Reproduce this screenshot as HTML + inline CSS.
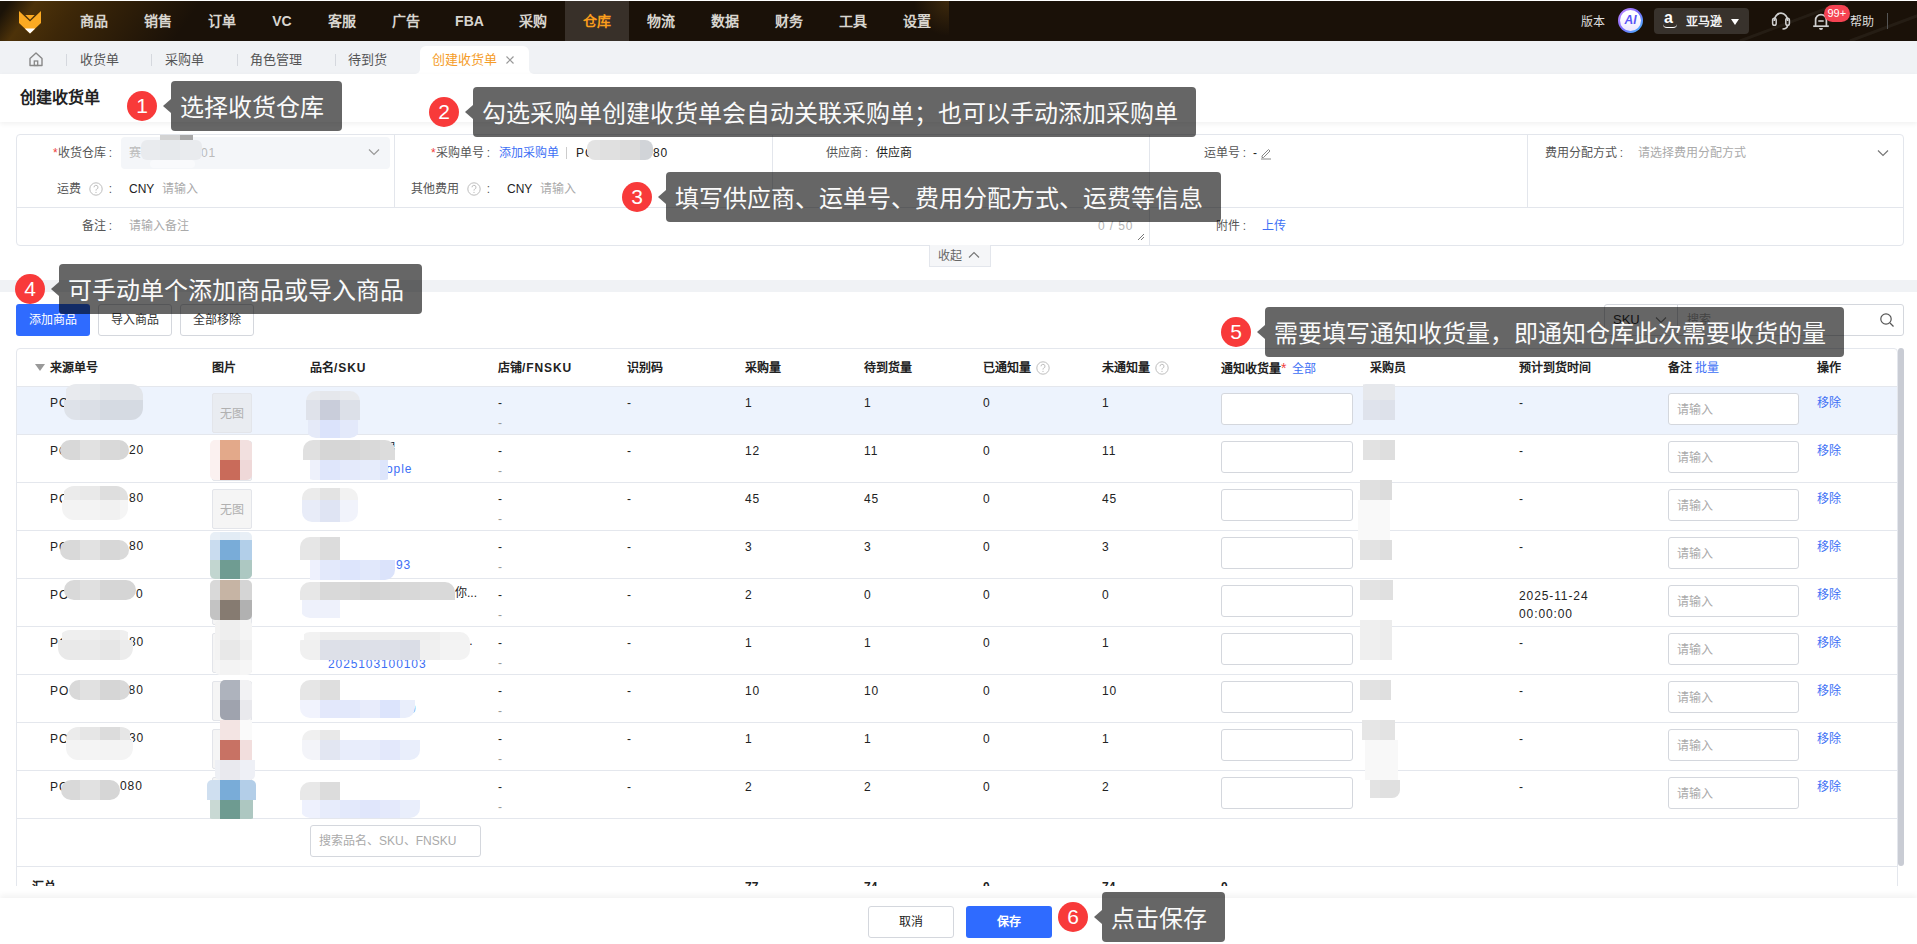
<!DOCTYPE html><html lang="zh-CN"><head><meta charset="utf-8"><style>
*{box-sizing:border-box;margin:0;padding:0}
html,body{width:1917px;height:944px;overflow:hidden;background:#fff}
body{position:relative;font-family:"Liberation Sans",sans-serif;color:#222;font-size:12px}
.a{position:absolute}
.t{position:absolute;white-space:nowrap;line-height:16px}
.hdr{left:0;top:1px;width:1917px;height:40px;background:#1a1108}
.nav{position:absolute;top:1px;height:40px;line-height:41px;color:#d8d5cf;font-size:14px;font-weight:bold;text-align:center}
.nav b{font-weight:bold}
.tabs{left:0;top:41px;width:1917px;height:33px;background:#f0f2f5}
.tab{position:absolute;top:52px;line-height:16px;font-size:13px;color:#555}
.sep{position:absolute;top:54px;width:1px;height:12px;background:#d5d8de}
.lbl{position:absolute;line-height:16px;font-size:12px;color:#555;text-align:right;white-space:nowrap}
.val{position:absolute;line-height:16px;font-size:12px;color:#222;white-space:nowrap}
.ph{color:#aaa}
.blue{color:#3d6ff5 !important}
.red{color:#f0413c !important}
.btn{position:absolute;border-radius:3px;text-align:center;font-size:12px;line-height:30px}
.th{position:absolute;top:360px;line-height:16px;font-weight:bold;font-size:12px;color:#222;white-space:nowrap}
.td{position:absolute;line-height:16px;font-size:12px;color:#222;white-space:nowrap}
.inp{position:absolute;width:132px;height:32px;border:1px solid #d4d7dd;border-radius:3px;background:#fff}
.inp2{position:absolute;width:131px;height:32px;border:1px solid #d4d7dd;border-radius:3px;background:#fff;font-size:12px;color:#aaa;line-height:32px;padding-left:8px}
.hl{position:absolute;left:17px;width:1880px;height:1px;background:#e4e7ed}
.tip{position:absolute;height:50px;background:rgba(0,0,0,0.6);border-radius:4px;color:#fafafa;font-size:24px;line-height:53px;padding-left:9px;white-space:nowrap}
.tip:before{content:"";position:absolute;left:-8px;top:17.5px;border-right:8px solid rgba(0,0,0,0.6);border-top:7.5px solid transparent;border-bottom:7.5px solid transparent}
.dot{position:absolute;width:30px;height:30px;border-radius:50%;background:#f83a3a;color:#fff;font-size:21px;line-height:30px;text-align:center}
.q{display:inline-block;width:14px;height:14px;vertical-align:-3px}
.ls{letter-spacing:0.9px}
.cl{font-style:normal;margin-left:3px}
.blob{position:absolute;filter:blur(1.5px)}
</style></head><body><div class="a hdr"></div>
<div class="a" style="left:0;top:1px;width:260px;height:40px;background:linear-gradient(125deg,#1b1308 0px,#1b1308 8px,#4d3209 30px,#3d2708 65px,rgba(26,17,8,0) 165px)"></div>
<svg class="a" style="left:1700px;top:1px" width="217" height="40" viewBox="0 0 217 40"><line x1="40" y1="40" x2="160" y2="-5" stroke="rgba(255,255,255,0.05)" stroke-width="3"/><line x1="150" y1="40" x2="230" y2="10" stroke="rgba(255,255,255,0.05)" stroke-width="3"/></svg>
<div class="a" style="left:900px;top:1px;width:49px;height:40px;background:radial-gradient(circle at 100% 0%,rgba(90,60,15,0.55) 0px,rgba(26,17,8,0) 35px)"></div>
<svg class="a" style="left:0;top:0" width="60" height="41" viewBox="0 0 60 41"><polygon points="19,11 30,21.5 41,11 41,23 30,33.5 19,23" fill="#fcaa22"/><polygon points="25.3,15 34.7,15 30,19.8" fill="#fcaa22"/><polygon points="24.8,28.5 35.2,28.5 30,33.5" fill="#fff"/></svg>
<div class="nav" style="left:62px;width:64px">商品</div>
<div class="nav" style="left:126px;width:64px">销售</div>
<div class="nav" style="left:190px;width:64px">订单</div>
<div class="nav" style="left:254px;width:56px"><b>VC</b></div>
<div class="nav" style="left:310px;width:64px">客服</div>
<div class="nav" style="left:374px;width:64px">广告</div>
<div class="nav" style="left:438px;width:63px"><b>FBA</b></div>
<div class="nav" style="left:501px;width:64px">采购</div>
<div class="nav" style="left:565px;width:64px;background:#383029;color:#fa9d1c">仓库</div>
<div class="nav" style="left:629px;width:64px">物流</div>
<div class="nav" style="left:693px;width:64px">数据</div>
<div class="nav" style="left:757px;width:64px">财务</div>
<div class="nav" style="left:821px;width:64px">工具</div>
<div class="nav" style="left:885px;width:64px">设置</div>
<div class="t" style="left:1581px;top:13.5px;color:#ddd;font-size:12px">版本</div>
<div class="a" style="left:1618px;top:8px;width:25px;height:25px;border-radius:50%;background:linear-gradient(135deg,#c98bff,#7b6cff 50%,#3ec3ff)"></div>
<div class="a" style="left:1620px;top:10px;width:21px;height:21px;border-radius:50%;background:linear-gradient(180deg,#fff 30%,#ece6ff);color:#5a55f5;font-weight:bold;font-style:italic;font-size:12px;line-height:21px;text-align:center">AI</div>
<div class="a" style="left:1654px;top:8px;width:95px;height:26px;border-radius:4px;background:#38322c"></div>
<div class="t" style="left:1664px;top:10px;color:#fff;font-size:16px;font-weight:bold">a</div>
<div class="a" style="left:1663px;top:23.5px;width:14px;height:4px;border-bottom:1.5px solid #fff;border-radius:0 0 9px 9px"></div>
<div class="t" style="left:1686px;top:13.5px;color:#f0f0f0;font-size:12px;font-weight:bold">亚马逊</div>
<div class="a" style="left:1731px;top:19px;width:0;height:0;border-left:4.5px solid transparent;border-right:4.5px solid transparent;border-top:6px solid #fff"></div>
<svg class="a" style="left:1770px;top:10px" width="22" height="22" viewBox="0 0 22 22"><path d="M4.3 11 A6.7 7.8 0 0 1 17.7 11" fill="none" stroke="#cfcfcf" stroke-width="1.8"/><rect x="2.6" y="8.2" width="3.6" height="7" rx="1.8" fill="none" stroke="#cfcfcf" stroke-width="1.5"/><rect x="15.8" y="8.2" width="3.6" height="7" rx="1.8" fill="none" stroke="#cfcfcf" stroke-width="1.5"/><path d="M17.6 15.2 Q17.4 18.8 12.5 19" fill="none" stroke="#cfcfcf" stroke-width="1.7"/></svg>
<svg class="a" style="left:1811px;top:11px" width="20" height="20" viewBox="0 0 20 20"><path d="M4.6 15 L4.6 9 A5.4 5.4 0 0 1 15.4 9 L15.4 15" fill="none" stroke="#cfcfcf" stroke-width="1.7"/><line x1="2.2" y1="15.2" x2="17.8" y2="15.2" stroke="#cfcfcf" stroke-width="1.7"/><line x1="7.3" y1="10" x2="12.7" y2="10" stroke="#cfcfcf" stroke-width="1.6"/><path d="M8 17 A2 2 0 0 0 12 17 Z" fill="#cfcfcf"/></svg>
<div class="a" style="left:1824px;top:4.5px;width:25.5px;height:17px;border-radius:8.5px;background:#f54352;color:#fff;font-size:11px;line-height:17px;text-align:center">99+</div>
<div class="t" style="left:1850px;top:13.5px;color:#ddd;font-size:12px">帮助</div>
<div class="a" style="left:1887px;top:13px;width:1px;height:16px;background:#555"></div>
<div class="a" style="left:0;top:41px;width:420px;height:33px;background:#f0f2f5;border-bottom-right-radius:5px"></div>
<div class="a" style="left:529px;top:41px;width:1388px;height:33px;background:#f0f2f5;border-bottom-left-radius:5px"></div>
<div class="a" style="left:420px;top:41px;width:109px;height:20px;background:#f0f2f5"></div>
<svg class="a" style="left:28px;top:51px" width="16" height="16" viewBox="0 0 16 16"><path d="M2 7.5 L8 2 L14 7.5 L14 14.5 L2 14.5 Z" fill="none" stroke="#888" stroke-width="1.4" stroke-linejoin="round"/><rect x="6.3" y="10" width="3.4" height="4.5" fill="none" stroke="#888" stroke-width="1.3"/></svg>
<div class="sep" style="left:66px"></div>
<div class="sep" style="left:151px"></div>
<div class="sep" style="left:237px"></div>
<div class="sep" style="left:335px"></div>
<div class="tab" style="left:80px">收货单</div>
<div class="tab" style="left:165px">采购单</div>
<div class="tab" style="left:250px">角色管理</div>
<div class="tab" style="left:348px">待到货</div>
<div class="a" style="left:420px;top:46px;width:109px;height:28px;background:#fff;border-radius:6px 6px 0 0"></div>
<div class="tab" style="left:432px;color:#f59c28">创建收货单</div>
<svg class="a" style="left:505px;top:55px" width="10" height="10" viewBox="0 0 10 10"><path d="M1.5 1.5 L8.5 8.5 M8.5 1.5 L1.5 8.5" stroke="#999" stroke-width="1.2"/></svg>
<div class="a" style="left:0;top:74px;width:1917px;height:48px;background:#fff;box-shadow:0 2px 5px rgba(0,0,0,0.06)"></div>
<div class="t" style="left:20px;top:89px;font-size:16px;line-height:18px;color:#222;font-weight:bold">创建收货单</div>
<div class="a" style="left:16px;top:134px;width:1888px;height:112px;border:1px solid #e3e6ec;border-radius:4px"></div>
<div class="a" style="left:17px;top:207px;width:1886px;height:1px;background:#e3e6ec"></div>
<div class="a" style="left:394px;top:135px;width:1px;height:72px;background:#e3e6ec"></div>
<div class="a" style="left:772px;top:135px;width:1px;height:72px;background:#e3e6ec"></div>
<div class="a" style="left:1149px;top:135px;width:1px;height:72px;background:#e3e6ec"></div>
<div class="a" style="left:1527px;top:135px;width:1px;height:72px;background:#e3e6ec"></div>
<div class="a" style="left:1149px;top:208px;width:1px;height:37px;background:#e3e6ec"></div>
<div class="lbl" style="right:1805px;top:145px"><span class="red">*</span>收货仓库<i class="cl">:</i></div>
<div class="a" style="left:121px;top:137px;width:269px;height:32px;background:#f4f6f9;border-radius:4px"></div>
<div class="val ph" style="left:129px;top:145px;color:#bbb">赛</div>
<div class="val ph ls" style="left:201px;top:145px;color:#bbb">01</div>
<svg class="a" style="left:368px;top:148px" width="12" height="8" viewBox="0 0 12 8"><path d="M1 1.5 L6 6.5 L11 1.5" fill="none" stroke="#999" stroke-width="1.2"/></svg>
<div class="lbl" style="right:1805px;top:181px">运费<svg class="q" style="margin:0 3px 0 8px" viewBox="0 0 14 14"><circle cx="7" cy="7" r="6.2" fill="none" stroke="#bdbdbd" stroke-width="1"/><path d="M5 5.3 A2 2 0 1 1 7.6 7.2 Q7 7.5 7 8.6" fill="none" stroke="#bdbdbd" stroke-width="1"/><circle cx="7" cy="10.4" r="0.6" fill="#bdbdbd"/></svg><i class="cl">:</i></div>
<div class="val" style="left:129px;top:181px">CNY</div><div class="val ph" style="left:162px;top:181px">请输入</div>
<div class="lbl" style="right:1805px;top:218px">备注<i class="cl">:</i></div>
<div class="val ph" style="left:129px;top:218px">请输入备注</div>
<div class="val ph ls" style="left:1098px;top:218px;color:#b5b5b5;font-size:12px">0 / 50</div>
<svg class="a" style="left:1136px;top:232px" width="9" height="9" viewBox="0 0 9 9"><path d="M8 2 L2 8 M8 5 L5 8" stroke="#777" stroke-width="1"/></svg>
<div class="lbl" style="right:1427px;top:145px"><span class="red">*</span>采购单号<i class="cl">:</i></div>
<div class="val blue" style="left:499px;top:145px">添加采购单</div>
<div class="a" style="left:566px;top:147px;width:1px;height:12px;background:#ccc"></div>
<div class="val ls" style="left:576px;top:145px">PC</div><div class="val ls" style="left:653px;top:145px">80</div>
<div class="lbl" style="right:1427px;top:181px">其他费用<svg class="q" style="margin:0 3px 0 8px" viewBox="0 0 14 14"><circle cx="7" cy="7" r="6.2" fill="none" stroke="#bdbdbd" stroke-width="1"/><path d="M5 5.3 A2 2 0 1 1 7.6 7.2 Q7 7.5 7 8.6" fill="none" stroke="#bdbdbd" stroke-width="1"/><circle cx="7" cy="10.4" r="0.6" fill="#bdbdbd"/></svg><i class="cl">:</i></div>
<div class="val" style="left:507px;top:181px">CNY</div><div class="val ph" style="left:540px;top:181px">请输入</div>
<div class="lbl" style="right:1049px;top:145px">供应商<i class="cl">:</i></div>
<div class="val" style="left:876px;top:145px">供应商</div>
<div class="lbl" style="right:671px;top:145px">运单号<i class="cl">:</i></div>
<div class="val" style="left:1253px;top:145px">-</div>
<svg class="a" style="left:1259px;top:146px" width="14" height="14" viewBox="0 0 14 14"><path d="M3 10 L9.5 3.5 L11 5 L4.5 11.5 L3 11.5 Z" fill="none" stroke="#888" stroke-width="1"/><line x1="2" y1="13" x2="12" y2="13" stroke="#888" stroke-width="1"/></svg>
<div class="lbl" style="right:294px;top:145px">费用分配方式<i class="cl">:</i></div>
<div class="val ph" style="left:1638px;top:145px">请选择费用分配方式</div>
<svg class="a" style="left:1877px;top:149px" width="12" height="8" viewBox="0 0 12 8"><path d="M1 1.5 L6 6.5 L11 1.5" fill="none" stroke="#777" stroke-width="1.2"/></svg>
<div class="lbl" style="right:671px;top:218px">附件<i class="cl">:</i></div>
<div class="val blue" style="left:1262px;top:218px">上传</div>
<div class="a" style="left:929px;top:245px;width:62px;height:22px;background:#f5f6f8;border:1px solid #e3e6ec;border-top:none"></div>
<div class="val" style="left:938px;top:248px;color:#666">收起</div>
<svg class="a" style="left:968px;top:251px" width="12" height="8" viewBox="0 0 12 8"><path d="M1 6.5 L6 1.5 L11 6.5" fill="none" stroke="#777" stroke-width="1.2"/></svg>
<div class="a" style="left:0;top:280px;width:1917px;height:12px;background:#f0f2f5"></div>
<div class="btn" style="left:16px;top:304px;width:74px;height:32px;background:#2f6bff;color:#fff;line-height:32px">添加商品</div>
<div class="btn" style="left:98px;top:304px;width:74px;height:32px;border:1px solid #d4d7dd;color:#333">导入商品</div>
<div class="btn" style="left:180px;top:304px;width:74px;height:32px;border:1px solid #d4d7dd;color:#333">全部移除</div>
<div class="a" style="left:1604px;top:304px;width:300px;height:32px;border:1px solid #d4d7dd;border-radius:3px"></div>
<div class="a" style="left:1677px;top:305px;width:1px;height:30px;background:#d4d7dd"></div>
<div class="val" style="left:1613px;top:312px;font-size:13px;color:#333">SKU</div>
<svg class="a" style="left:1655px;top:316px" width="12" height="8" viewBox="0 0 12 8"><path d="M1 1.5 L6 6.5 L11 1.5" fill="none" stroke="#888" stroke-width="1.2"/></svg>
<div class="val ph" style="left:1687px;top:312px;font-size:12px">搜索</div>
<svg class="a" style="left:1879px;top:312px" width="16" height="16" viewBox="0 0 16 16"><circle cx="7" cy="7" r="5.2" fill="none" stroke="#555" stroke-width="1.2"/><line x1="11" y1="11" x2="14.5" y2="14.5" stroke="#555" stroke-width="1.3"/></svg>
<div class="a" style="left:16px;top:348px;width:1882px;height:560px;border:1px solid #e4e7ed;border-radius:4px"></div>
<div class="a" style="left:1898px;top:348px;width:6px;height:518px;background:#c9ccd4;border-radius:3px"></div>
<div class="hl" style="top:386px"></div>
<div class="a" style="left:35px;top:364px;width:0;height:0;border-left:5px solid transparent;border-right:5px solid transparent;border-top:7px solid #999"></div>
<div class="th" style="left:50px">来源单号</div>
<div class="th" style="left:212px">图片</div>
<div class="th" style="left:310px">品名<span class="ls">/SKU</span></div>
<div class="th" style="left:498px">店铺<span class="ls">/FNSKU</span></div>
<div class="th" style="left:627px">识别码</div>
<div class="th" style="left:745px">采购量</div>
<div class="th" style="left:864px">待到货量</div>
<div class="th" style="left:983px">已通知量<svg class="q" style="margin:0 0 0 5px" viewBox="0 0 14 14"><circle cx="7" cy="7" r="6.2" fill="none" stroke="#bdbdbd" stroke-width="1"/><path d="M5 5.3 A2 2 0 1 1 7.6 7.2 Q7 7.5 7 8.6" fill="none" stroke="#bdbdbd" stroke-width="1"/><circle cx="7" cy="10.4" r="0.6" fill="#bdbdbd"/></svg></div>
<div class="th" style="left:1102px">未通知量<svg class="q" style="margin:0 0 0 5px" viewBox="0 0 14 14"><circle cx="7" cy="7" r="6.2" fill="none" stroke="#bdbdbd" stroke-width="1"/><path d="M5 5.3 A2 2 0 1 1 7.6 7.2 Q7 7.5 7 8.6" fill="none" stroke="#bdbdbd" stroke-width="1"/><circle cx="7" cy="10.4" r="0.6" fill="#bdbdbd"/></svg></div>
<div class="th" style="left:1221px">通知收货量<span class="red" style="font-weight:normal;font-size:14px">*</span><span class="blue" style="font-weight:normal;margin-left:6px">全部</span></div>
<div class="th" style="left:1370px">采购员</div>
<div class="th" style="left:1519px">预计到货时间</div>
<div class="th" style="left:1668px">备注 <span class="blue" style="font-weight:normal">批量</span></div>
<div class="th" style="left:1817px">操作</div>
<div class="a" style="left:17px;top:387px;width:1880px;height:47px;background:#edf3fd"></div>
<div class="hl" style="top:434px"></div>
<div class="td ls" style="left:50px;top:394.5px">PO</div>
<div class="td" style="left:498px;top:394.5px">-</div><div class="td" style="left:498px;top:414.5px;color:#999">-</div>
<div class="td" style="left:627px;top:394.5px">-</div>
<div class="td ls" style="left:745px;top:394.5px">1</div>
<div class="td ls" style="left:864px;top:394.5px">1</div>
<div class="td ls" style="left:983px;top:394.5px">0</div>
<div class="td ls" style="left:1102px;top:394.5px">1</div>
<div class="inp" style="left:1221px;top:393px"></div>
<div class="td" style="left:1519px;top:394.5px">-</div>
<div class="inp2" style="left:1668px;top:393px">请输入</div>
<div class="td blue" style="left:1817px;top:394.5px">移除</div>
<div class="hl" style="top:482px"></div>
<div class="td ls" style="left:50px;top:442.5px">PO</div>
<div class="td" style="left:498px;top:442.5px">-</div><div class="td" style="left:498px;top:462.5px;color:#999">-</div>
<div class="td" style="left:627px;top:442.5px">-</div>
<div class="td ls" style="left:745px;top:442.5px">12</div>
<div class="td ls" style="left:864px;top:442.5px">11</div>
<div class="td ls" style="left:983px;top:442.5px">0</div>
<div class="td ls" style="left:1102px;top:442.5px">11</div>
<div class="inp" style="left:1221px;top:441px"></div>
<div class="td" style="left:1519px;top:442.5px">-</div>
<div class="inp2" style="left:1668px;top:441px">请输入</div>
<div class="td blue" style="left:1817px;top:442.5px">移除</div>
<div class="hl" style="top:530px"></div>
<div class="td ls" style="left:50px;top:490.5px">PO</div>
<div class="td" style="left:498px;top:490.5px">-</div><div class="td" style="left:498px;top:510.5px;color:#999">-</div>
<div class="td" style="left:627px;top:490.5px">-</div>
<div class="td ls" style="left:745px;top:490.5px">45</div>
<div class="td ls" style="left:864px;top:490.5px">45</div>
<div class="td ls" style="left:983px;top:490.5px">0</div>
<div class="td ls" style="left:1102px;top:490.5px">45</div>
<div class="inp" style="left:1221px;top:489px"></div>
<div class="td" style="left:1519px;top:490.5px">-</div>
<div class="inp2" style="left:1668px;top:489px">请输入</div>
<div class="td blue" style="left:1817px;top:490.5px">移除</div>
<div class="hl" style="top:578px"></div>
<div class="td ls" style="left:50px;top:538.5px">PO</div>
<div class="td" style="left:498px;top:538.5px">-</div><div class="td" style="left:498px;top:558.5px;color:#999">-</div>
<div class="td" style="left:627px;top:538.5px">-</div>
<div class="td ls" style="left:745px;top:538.5px">3</div>
<div class="td ls" style="left:864px;top:538.5px">3</div>
<div class="td ls" style="left:983px;top:538.5px">0</div>
<div class="td ls" style="left:1102px;top:538.5px">3</div>
<div class="inp" style="left:1221px;top:537px"></div>
<div class="td" style="left:1519px;top:538.5px">-</div>
<div class="inp2" style="left:1668px;top:537px">请输入</div>
<div class="td blue" style="left:1817px;top:538.5px">移除</div>
<div class="hl" style="top:626px"></div>
<div class="td ls" style="left:50px;top:586.5px">PO</div>
<div class="td" style="left:498px;top:586.5px">-</div><div class="td" style="left:498px;top:606.5px;color:#999">-</div>
<div class="td" style="left:627px;top:586.5px">-</div>
<div class="td ls" style="left:745px;top:586.5px">2</div>
<div class="td ls" style="left:864px;top:586.5px">0</div>
<div class="td ls" style="left:983px;top:586.5px">0</div>
<div class="td ls" style="left:1102px;top:586.5px">0</div>
<div class="inp" style="left:1221px;top:585px"></div>
<div class="td ls" style="left:1519px;top:586.5px;line-height:18px">2025-11-24<br>00:00:00</div>
<div class="inp2" style="left:1668px;top:585px">请输入</div>
<div class="td blue" style="left:1817px;top:586.5px">移除</div>
<div class="hl" style="top:674px"></div>
<div class="td ls" style="left:50px;top:634.5px">PO</div>
<div class="td" style="left:498px;top:634.5px">-</div><div class="td" style="left:498px;top:654.5px;color:#999">-</div>
<div class="td" style="left:627px;top:634.5px">-</div>
<div class="td ls" style="left:745px;top:634.5px">1</div>
<div class="td ls" style="left:864px;top:634.5px">1</div>
<div class="td ls" style="left:983px;top:634.5px">0</div>
<div class="td ls" style="left:1102px;top:634.5px">1</div>
<div class="inp" style="left:1221px;top:633px"></div>
<div class="td" style="left:1519px;top:634.5px">-</div>
<div class="inp2" style="left:1668px;top:633px">请输入</div>
<div class="td blue" style="left:1817px;top:634.5px">移除</div>
<div class="hl" style="top:722px"></div>
<div class="td ls" style="left:50px;top:682.5px">PO</div>
<div class="td" style="left:498px;top:682.5px">-</div><div class="td" style="left:498px;top:702.5px;color:#999">-</div>
<div class="td" style="left:627px;top:682.5px">-</div>
<div class="td ls" style="left:745px;top:682.5px">10</div>
<div class="td ls" style="left:864px;top:682.5px">10</div>
<div class="td ls" style="left:983px;top:682.5px">0</div>
<div class="td ls" style="left:1102px;top:682.5px">10</div>
<div class="inp" style="left:1221px;top:681px"></div>
<div class="td" style="left:1519px;top:682.5px">-</div>
<div class="inp2" style="left:1668px;top:681px">请输入</div>
<div class="td blue" style="left:1817px;top:682.5px">移除</div>
<div class="hl" style="top:770px"></div>
<div class="td ls" style="left:50px;top:730.5px">PO</div>
<div class="td" style="left:498px;top:730.5px">-</div><div class="td" style="left:498px;top:750.5px;color:#999">-</div>
<div class="td" style="left:627px;top:730.5px">-</div>
<div class="td ls" style="left:745px;top:730.5px">1</div>
<div class="td ls" style="left:864px;top:730.5px">1</div>
<div class="td ls" style="left:983px;top:730.5px">0</div>
<div class="td ls" style="left:1102px;top:730.5px">1</div>
<div class="inp" style="left:1221px;top:729px"></div>
<div class="td" style="left:1519px;top:730.5px">-</div>
<div class="inp2" style="left:1668px;top:729px">请输入</div>
<div class="td blue" style="left:1817px;top:730.5px">移除</div>
<div class="hl" style="top:818px"></div>
<div class="td ls" style="left:50px;top:778.5px">PO</div>
<div class="td" style="left:498px;top:778.5px">-</div><div class="td" style="left:498px;top:798.5px;color:#999">-</div>
<div class="td" style="left:627px;top:778.5px">-</div>
<div class="td ls" style="left:745px;top:778.5px">2</div>
<div class="td ls" style="left:864px;top:778.5px">2</div>
<div class="td ls" style="left:983px;top:778.5px">0</div>
<div class="td ls" style="left:1102px;top:778.5px">2</div>
<div class="inp" style="left:1221px;top:777px"></div>
<div class="td" style="left:1519px;top:778.5px">-</div>
<div class="inp2" style="left:1668px;top:777px">请输入</div>
<div class="td blue" style="left:1817px;top:778.5px">移除</div>
<div class="a" style="left:212px;top:393px;width:40px;height:40px;border:1px solid #e3e5ea;border-radius:2px;background:#e9ecf1"></div>
<div class="td" style="left:220px;top:406px;color:#b0b0b0">无图</div>
<div class="a" style="left:212px;top:441px;width:40px;height:40px;border:1px solid #e3e5ea;border-radius:2px;background:#f5f5f5"></div>
<div class="a" style="left:212px;top:489px;width:40px;height:40px;border:1px solid #e3e5ea;border-radius:2px;background:#f5f5f5"></div>
<div class="td" style="left:220px;top:502px;color:#b0b0b0">无图</div>
<div class="a" style="left:212px;top:537px;width:40px;height:40px;border:1px solid #e3e5ea;border-radius:2px;background:#f5f5f5"></div>
<div class="a" style="left:212px;top:585px;width:40px;height:40px;border:1px solid #e3e5ea;border-radius:2px;background:#f5f5f5"></div>
<div class="a" style="left:212px;top:633px;width:40px;height:40px;border:1px solid #e3e5ea;border-radius:2px;background:#f5f5f5"></div>
<div class="a" style="left:212px;top:681px;width:40px;height:40px;border:1px solid #e3e5ea;border-radius:2px;background:#f5f5f5"></div>
<div class="a" style="left:212px;top:729px;width:40px;height:40px;border:1px solid #e3e5ea;border-radius:2px;background:#f5f5f5"></div>
<div class="a" style="left:212px;top:777px;width:40px;height:40px;border:1px solid #e3e5ea;border-radius:2px;background:#f5f5f5"></div>
<div class="td ls" style="left:129px;top:442px">20</div>
<div class="td ls" style="left:129px;top:490px">80</div>
<div class="td ls" style="left:129px;top:538px">80</div>
<div class="td ls" style="left:136px;top:586px">0</div>
<div class="td ls" style="left:129px;top:634px">80</div>
<div class="td ls" style="left:121px;top:682px">080</div>
<div class="td ls" style="left:129px;top:730px">30</div>
<div class="td ls" style="left:120px;top:778px">080</div>
<div class="td" style="left:384px;top:440px">男</div>
<div class="td blue ls" style="left:386px;top:461px">ople</div>
<div class="td blue ls" style="left:396px;top:557px">93</div>
<div class="td" style="left:455px;top:585px">你...</div>
<div class="td" style="left:466px;top:633px">..</div>
<div class="td blue ls" style="left:328px;top:656px">2025103100103</div>
<div class="td blue ls" style="left:409px;top:701px">9</div>
<div class="a" style="left:141px;top:140px;width:61px;height:20px;overflow:hidden;border-radius:6px"><div class="a" style="left:0px;top:0px;width:19px;height:20px;background:#e9ebee"></div><div class="a" style="left:19px;top:0px;width:20px;height:20px;background:#e6e9ec"></div><div class="a" style="left:39px;top:0px;width:22px;height:20px;background:#e9ebee"></div></div>
<div class="a" style="left:160px;top:135px;width:33px;height:5px;overflow:hidden;border-radius:0px"><div class="a" style="left:0px;top:0px;width:20px;height:5px;background:#d3d3d3"></div><div class="a" style="left:20px;top:0px;width:13px;height:5px;background:#a8a8a8"></div></div>
<div class="a" style="left:150px;top:160px;width:45px;height:8px;overflow:hidden;border-radius:4px"><div class="a" style="left:0px;top:0px;width:45px;height:8px;background:#f9fafc"></div></div>
<div class="a" style="left:587px;top:140px;width:66px;height:20px;overflow:hidden;border-radius:8px"><div class="a" style="left:0px;top:0px;width:13px;height:20px;background:#e3e3e3"></div><div class="a" style="left:13px;top:0px;width:20px;height:20px;background:#e0e0e0"></div><div class="a" style="left:33px;top:0px;width:20px;height:20px;background:#dcdcdc"></div><div class="a" style="left:53px;top:0px;width:13px;height:20px;background:#d1d4d8"></div></div>
<div class="a" style="left:64px;top:384px;width:79px;height:36px;overflow:hidden;border-radius:12px"><div class="a" style="left:2px;top:0px;width:14px;height:16px;background:#e8eaee"></div><div class="a" style="left:16px;top:0px;width:20px;height:16px;background:#e6e9ed"></div><div class="a" style="left:36px;top:0px;width:20px;height:16px;background:#e2e5ea"></div><div class="a" style="left:56px;top:0px;width:23px;height:16px;background:#e2e5ea"></div><div class="a" style="left:0px;top:16px;width:16px;height:20px;background:#dee2e9"></div><div class="a" style="left:16px;top:16px;width:20px;height:20px;background:#dbdfe6"></div><div class="a" style="left:36px;top:16px;width:20px;height:20px;background:#d5dae2"></div><div class="a" style="left:56px;top:16px;width:23px;height:20px;background:#d5dae2"></div></div>
<div class="a" style="left:60px;top:440px;width:69px;height:20px;overflow:hidden;border-radius:12px"><div class="a" style="left:0px;top:0px;width:20px;height:20px;background:#d8d8d8"></div><div class="a" style="left:20px;top:0px;width:20px;height:20px;background:#e1e1e1"></div><div class="a" style="left:40px;top:0px;width:20px;height:20px;background:#d9d9d9"></div><div class="a" style="left:60px;top:0px;width:9px;height:20px;background:#d6d6d6"></div></div>
<div class="a" style="left:62px;top:486px;width:66px;height:34px;overflow:hidden;border-radius:12px"><div class="a" style="left:2px;top:0px;width:16px;height:14px;background:#ebebeb"></div><div class="a" style="left:18px;top:0px;width:20px;height:14px;background:#e9e9e9"></div><div class="a" style="left:38px;top:0px;width:20px;height:14px;background:#dedede"></div><div class="a" style="left:58px;top:0px;width:8px;height:14px;background:#e0e0e0"></div><div class="a" style="left:0px;top:14px;width:18px;height:20px;background:#f3f3f3"></div><div class="a" style="left:18px;top:14px;width:20px;height:20px;background:#f3f3f3"></div><div class="a" style="left:38px;top:14px;width:20px;height:20px;background:#f1f1f1"></div><div class="a" style="left:58px;top:14px;width:8px;height:20px;background:#f5f5f5"></div></div>
<div class="a" style="left:60px;top:540px;width:69px;height:20px;overflow:hidden;border-radius:12px"><div class="a" style="left:0px;top:0px;width:20px;height:20px;background:#d9d9d9"></div><div class="a" style="left:20px;top:0px;width:20px;height:20px;background:#e2e2e2"></div><div class="a" style="left:40px;top:0px;width:20px;height:20px;background:#d7d7d7"></div><div class="a" style="left:60px;top:0px;width:9px;height:20px;background:#dadada"></div></div>
<div class="a" style="left:64px;top:580px;width:72px;height:20px;overflow:hidden;border-radius:12px"><div class="a" style="left:0px;top:0px;width:16px;height:20px;background:#d9d9d9"></div><div class="a" style="left:16px;top:0px;width:20px;height:20px;background:#e0e0e0"></div><div class="a" style="left:36px;top:0px;width:20px;height:20px;background:#d6d6d6"></div><div class="a" style="left:56px;top:0px;width:16px;height:20px;background:#d5d5d5"></div></div>
<div class="a" style="left:58px;top:630px;width:75px;height:30px;overflow:hidden;border-radius:12px"><div class="a" style="left:4px;top:0px;width:18px;height:10px;background:#efefef"></div><div class="a" style="left:22px;top:0px;width:20px;height:10px;background:#eeeeee"></div><div class="a" style="left:42px;top:0px;width:20px;height:10px;background:#ebebeb"></div><div class="a" style="left:62px;top:0px;width:8px;height:10px;background:#efefef"></div><div class="a" style="left:0px;top:10px;width:22px;height:20px;background:#e9e9e9"></div><div class="a" style="left:22px;top:10px;width:20px;height:20px;background:#eaeaea"></div><div class="a" style="left:42px;top:10px;width:20px;height:20px;background:#e6e6e6"></div><div class="a" style="left:62px;top:10px;width:13px;height:20px;background:#ececec"></div></div>
<div class="a" style="left:69px;top:680px;width:61px;height:20px;overflow:hidden;border-radius:12px"><div class="a" style="left:0px;top:0px;width:11px;height:20px;background:#d9d9d9"></div><div class="a" style="left:11px;top:0px;width:20px;height:20px;background:#e1e1e1"></div><div class="a" style="left:31px;top:0px;width:20px;height:20px;background:#d6d6d6"></div><div class="a" style="left:51px;top:0px;width:10px;height:20px;background:#d9d9d9"></div></div>
<div class="a" style="left:66px;top:727px;width:67px;height:33px;overflow:hidden;border-radius:12px"><div class="a" style="left:0px;top:0px;width:14px;height:13px;background:#ebebeb"></div><div class="a" style="left:14px;top:0px;width:20px;height:13px;background:#e6e6e6"></div><div class="a" style="left:34px;top:0px;width:20px;height:13px;background:#dcdcdc"></div><div class="a" style="left:54px;top:0px;width:10px;height:13px;background:#e6e6e6"></div><div class="a" style="left:0px;top:13px;width:14px;height:20px;background:#f3f3f3"></div><div class="a" style="left:14px;top:13px;width:20px;height:20px;background:#f4f4f4"></div><div class="a" style="left:34px;top:13px;width:20px;height:20px;background:#f3f3f3"></div><div class="a" style="left:54px;top:13px;width:13px;height:20px;background:#f4f4f4"></div></div>
<div class="a" style="left:61px;top:780px;width:59px;height:20px;overflow:hidden;border-radius:12px"><div class="a" style="left:0px;top:0px;width:19px;height:20px;background:#d9d9d9"></div><div class="a" style="left:19px;top:0px;width:20px;height:20px;background:#e1e1e1"></div><div class="a" style="left:39px;top:0px;width:20px;height:20px;background:#d6d6d6"></div></div>
<div class="a" style="left:210px;top:440px;width:42px;height:40px;overflow:hidden;border-radius:5px"><div class="a" style="left:0px;top:0px;width:10px;height:20px;background:#fbf1f0"></div><div class="a" style="left:10px;top:0px;width:20px;height:20px;background:#e3a98a"></div><div class="a" style="left:30px;top:0px;width:12px;height:20px;background:#f2e0df"></div><div class="a" style="left:0px;top:20px;width:10px;height:20px;background:#fbf1f0"></div><div class="a" style="left:10px;top:20px;width:20px;height:20px;background:#c96b5a"></div><div class="a" style="left:30px;top:20px;width:12px;height:20px;background:#efd8d8"></div></div>
<div class="a" style="left:210px;top:532px;width:42px;height:47px;overflow:hidden;border-radius:5px"><div class="a" style="left:0px;top:0px;width:10px;height:8px;background:#e8eff6"></div><div class="a" style="left:10px;top:0px;width:20px;height:8px;background:#e2ecf5"></div><div class="a" style="left:30px;top:0px;width:12px;height:8px;background:#e8eff6"></div><div class="a" style="left:0px;top:8px;width:10px;height:20px;background:#c9dcef"></div><div class="a" style="left:10px;top:8px;width:20px;height:20px;background:#79acd8"></div><div class="a" style="left:30px;top:8px;width:12px;height:20px;background:#b2cfe9"></div><div class="a" style="left:0px;top:28px;width:10px;height:19px;background:#c2d6d0"></div><div class="a" style="left:10px;top:28px;width:20px;height:19px;background:#6f9c92"></div><div class="a" style="left:30px;top:28px;width:12px;height:19px;background:#adc8c2"></div></div>
<div class="a" style="left:210px;top:580px;width:42px;height:40px;overflow:hidden;border-radius:5px"><div class="a" style="left:0px;top:0px;width:10px;height:20px;background:#d9d9d9"></div><div class="a" style="left:10px;top:0px;width:20px;height:20px;background:#c6b4a4"></div><div class="a" style="left:30px;top:0px;width:12px;height:20px;background:#d5d5d5"></div><div class="a" style="left:0px;top:20px;width:10px;height:20px;background:#c3c3c3"></div><div class="a" style="left:10px;top:20px;width:20px;height:20px;background:#867b71"></div><div class="a" style="left:30px;top:20px;width:12px;height:20px;background:#b1b1b1"></div></div>
<div class="a" style="left:215px;top:620px;width:37px;height:55px;overflow:hidden;border-radius:5px"><div class="a" style="left:0px;top:0px;width:5px;height:20px;background:#f2f2f2"></div><div class="a" style="left:5px;top:0px;width:20px;height:20px;background:#eeeeee"></div><div class="a" style="left:25px;top:0px;width:12px;height:20px;background:#f4f4f4"></div><div class="a" style="left:0px;top:20px;width:5px;height:20px;background:#f3f3f3"></div><div class="a" style="left:5px;top:20px;width:20px;height:20px;background:#e8e8e8"></div><div class="a" style="left:25px;top:20px;width:12px;height:20px;background:#f0f0f0"></div><div class="a" style="left:0px;top:40px;width:5px;height:15px;background:#f6f6f6"></div><div class="a" style="left:5px;top:40px;width:20px;height:15px;background:#f3f3f3"></div><div class="a" style="left:25px;top:40px;width:12px;height:15px;background:#f6f6f6"></div></div>
<div class="a" style="left:220px;top:680px;width:32px;height:40px;overflow:hidden;border-radius:5px"><div class="a" style="left:0px;top:0px;width:20px;height:20px;background:#aeb3bd"></div><div class="a" style="left:20px;top:0px;width:12px;height:20px;background:#f2f2f4"></div><div class="a" style="left:0px;top:20px;width:20px;height:20px;background:#9fa3ae"></div><div class="a" style="left:20px;top:20px;width:12px;height:20px;background:#e9e9ed"></div></div>
<div class="a" style="left:215px;top:720px;width:40px;height:60px;overflow:hidden;border-radius:5px"><div class="a" style="left:5px;top:0px;width:20px;height:20px;background:#f3e4e3"></div><div class="a" style="left:25px;top:0px;width:12px;height:20px;background:#fafafa"></div><div class="a" style="left:5px;top:20px;width:20px;height:20px;background:#c87264"></div><div class="a" style="left:25px;top:20px;width:12px;height:20px;background:#f2dedd"></div><div class="a" style="left:0px;top:40px;width:5px;height:20px;background:#eef0f5"></div><div class="a" style="left:5px;top:40px;width:20px;height:20px;background:#e9e9ee"></div><div class="a" style="left:25px;top:40px;width:15px;height:20px;background:#eef0f6"></div></div>
<div class="a" style="left:207px;top:780px;width:49px;height:39px;overflow:hidden;border-radius:5px"><div class="a" style="left:0px;top:0px;width:13px;height:20px;background:#cfdff0"></div><div class="a" style="left:13px;top:0px;width:20px;height:20px;background:#79acd8"></div><div class="a" style="left:33px;top:0px;width:16px;height:20px;background:#b3cee8"></div><div class="a" style="left:3px;top:20px;width:10px;height:19px;background:#c9d9d4"></div><div class="a" style="left:13px;top:20px;width:20px;height:19px;background:#6e9b91"></div><div class="a" style="left:33px;top:20px;width:13px;height:19px;background:#adc7c1"></div></div>
<div class="a" style="left:306px;top:391px;width:54px;height:47px;overflow:hidden;border-radius:10px"><div class="a" style="left:0px;top:0px;width:14px;height:9px;background:#e8eaee"></div><div class="a" style="left:14px;top:0px;width:20px;height:9px;background:#e5e7ec"></div><div class="a" style="left:34px;top:0px;width:20px;height:9px;background:#e8eaee"></div><div class="a" style="left:0px;top:9px;width:14px;height:20px;background:#dfe2ea"></div><div class="a" style="left:14px;top:9px;width:20px;height:20px;background:#c9cdda"></div><div class="a" style="left:34px;top:9px;width:20px;height:20px;background:#dce0e8"></div><div class="a" style="left:2px;top:29px;width:12px;height:18px;background:#e5eaf8"></div><div class="a" style="left:14px;top:29px;width:20px;height:18px;background:#dbe3fb"></div><div class="a" style="left:34px;top:29px;width:18px;height:18px;background:#e3e9fa"></div></div>
<div class="a" style="left:303px;top:440px;width:92px;height:40px;overflow:hidden;border-radius:10px"><div class="a" style="left:0px;top:0px;width:17px;height:20px;background:#e0e0e0"></div><div class="a" style="left:17px;top:0px;width:20px;height:20px;background:#d6d6d6"></div><div class="a" style="left:37px;top:0px;width:20px;height:20px;background:#d6d6d6"></div><div class="a" style="left:57px;top:0px;width:20px;height:20px;background:#d9d9d9"></div><div class="a" style="left:77px;top:0px;width:15px;height:20px;background:#dcdcdc"></div><div class="a" style="left:7px;top:20px;width:10px;height:20px;background:#eef1fb"></div><div class="a" style="left:17px;top:20px;width:20px;height:20px;background:#dfe6fb"></div><div class="a" style="left:37px;top:20px;width:20px;height:20px;background:#e4eafb"></div><div class="a" style="left:57px;top:20px;width:20px;height:20px;background:#e6ecfb"></div><div class="a" style="left:77px;top:20px;width:8px;height:20px;background:#dde5fb"></div></div>
<div class="a" style="left:302px;top:488px;width:56px;height:34px;overflow:hidden;border-radius:10px"><div class="a" style="left:0px;top:0px;width:18px;height:12px;background:#ebebeb"></div><div class="a" style="left:18px;top:0px;width:20px;height:12px;background:#e3e3e3"></div><div class="a" style="left:38px;top:0px;width:18px;height:12px;background:#f2f2f2"></div><div class="a" style="left:0px;top:12px;width:18px;height:22px;background:#e8ecf8"></div><div class="a" style="left:18px;top:12px;width:20px;height:22px;background:#dfe4f3"></div><div class="a" style="left:38px;top:12px;width:18px;height:22px;background:#f1f3fb"></div></div>
<div class="a" style="left:300px;top:537px;width:95px;height:43px;overflow:hidden;border-radius:10px"><div class="a" style="left:0px;top:0px;width:20px;height:23px;background:#e6e6e6"></div><div class="a" style="left:20px;top:0px;width:20px;height:23px;background:#dcdcdc"></div><div class="a" style="left:10px;top:23px;width:10px;height:20px;background:#eef1fd"></div><div class="a" style="left:20px;top:23px;width:20px;height:20px;background:#e3e9fb"></div><div class="a" style="left:40px;top:23px;width:20px;height:20px;background:#dde5fc"></div><div class="a" style="left:60px;top:23px;width:20px;height:20px;background:#e1e8fb"></div><div class="a" style="left:80px;top:23px;width:15px;height:20px;background:#dbe3fb"></div></div>
<div class="a" style="left:300px;top:582px;width:155px;height:36px;overflow:hidden;border-radius:10px"><div class="a" style="left:0px;top:0px;width:20px;height:18px;background:#e7e7e7"></div><div class="a" style="left:20px;top:0px;width:20px;height:18px;background:#d9d9d9"></div><div class="a" style="left:40px;top:0px;width:20px;height:18px;background:#d8d8d8"></div><div class="a" style="left:60px;top:0px;width:20px;height:18px;background:#d4d4d4"></div><div class="a" style="left:80px;top:0px;width:20px;height:18px;background:#d6d6d6"></div><div class="a" style="left:100px;top:0px;width:20px;height:18px;background:#d8d8d8"></div><div class="a" style="left:120px;top:0px;width:20px;height:18px;background:#dadada"></div><div class="a" style="left:140px;top:0px;width:15px;height:18px;background:#d9d9d9"></div><div class="a" style="left:2px;top:18px;width:18px;height:18px;background:#eef1fb"></div><div class="a" style="left:20px;top:18px;width:20px;height:18px;background:#eef1fb"></div></div>
<div class="a" style="left:300px;top:632px;width:170px;height:28px;overflow:hidden;border-radius:10px"><div class="a" style="left:4px;top:0px;width:16px;height:8px;background:#f2f2f2"></div><div class="a" style="left:20px;top:0px;width:120px;height:8px;background:#eeeeee"></div><div class="a" style="left:140px;top:0px;width:30px;height:8px;background:#f2f2f2"></div><div class="a" style="left:0px;top:8px;width:20px;height:20px;background:#f0f0f0"></div><div class="a" style="left:20px;top:8px;width:20px;height:20px;background:#dde0e8"></div><div class="a" style="left:40px;top:8px;width:20px;height:20px;background:#dcdfe7"></div><div class="a" style="left:60px;top:8px;width:20px;height:20px;background:#dde0e8"></div><div class="a" style="left:80px;top:8px;width:20px;height:20px;background:#dde0e8"></div><div class="a" style="left:100px;top:8px;width:20px;height:20px;background:#dadde6"></div><div class="a" style="left:120px;top:8px;width:20px;height:20px;background:#f0f0f0"></div><div class="a" style="left:140px;top:8px;width:30px;height:20px;background:#f3f3f3"></div></div>
<div class="a" style="left:300px;top:680px;width:115px;height:38px;overflow:hidden;border-radius:10px"><div class="a" style="left:0px;top:0px;width:20px;height:20px;background:#e6e6e6"></div><div class="a" style="left:20px;top:0px;width:20px;height:20px;background:#dedede"></div><div class="a" style="left:0px;top:20px;width:20px;height:18px;background:#f1f3fd"></div><div class="a" style="left:20px;top:20px;width:20px;height:18px;background:#e3e8fb"></div><div class="a" style="left:40px;top:20px;width:20px;height:18px;background:#e2e8fb"></div><div class="a" style="left:60px;top:20px;width:20px;height:18px;background:#e8ecfb"></div><div class="a" style="left:80px;top:20px;width:20px;height:18px;background:#dce4fc"></div><div class="a" style="left:100px;top:20px;width:15px;height:18px;background:#e9eefb"></div></div>
<div class="a" style="left:302px;top:730px;width:118px;height:30px;overflow:hidden;border-radius:10px"><div class="a" style="left:0px;top:0px;width:18px;height:10px;background:#f0f0f0"></div><div class="a" style="left:18px;top:0px;width:20px;height:10px;background:#e8e8e8"></div><div class="a" style="left:0px;top:10px;width:18px;height:20px;background:#f3f4f9"></div><div class="a" style="left:18px;top:10px;width:20px;height:20px;background:#e2e6f2"></div><div class="a" style="left:38px;top:10px;width:20px;height:20px;background:#e8edfb"></div><div class="a" style="left:58px;top:10px;width:20px;height:20px;background:#e8edfb"></div><div class="a" style="left:78px;top:10px;width:20px;height:20px;background:#e3e8fb"></div><div class="a" style="left:98px;top:10px;width:20px;height:20px;background:#e9eefb"></div></div>
<div class="a" style="left:300px;top:782px;width:120px;height:36px;overflow:hidden;border-radius:10px"><div class="a" style="left:0px;top:0px;width:20px;height:18px;background:#e8e8e8"></div><div class="a" style="left:20px;top:0px;width:20px;height:18px;background:#dcdcdc"></div><div class="a" style="left:2px;top:18px;width:18px;height:18px;background:#eef1fd"></div><div class="a" style="left:20px;top:18px;width:20px;height:18px;background:#e7ecfb"></div><div class="a" style="left:40px;top:18px;width:20px;height:18px;background:#e3e9fb"></div><div class="a" style="left:60px;top:18px;width:20px;height:18px;background:#e0e6fb"></div><div class="a" style="left:80px;top:18px;width:20px;height:18px;background:#e4e9fb"></div><div class="a" style="left:100px;top:18px;width:20px;height:18px;background:#e9eefb"></div></div>
<div class="a" style="left:1358px;top:384px;width:42px;height:414px;overflow:hidden;border-radius:8px"><div class="a" style="left:5px;top:0px;width:17px;height:16px;background:#e6e8ec"></div><div class="a" style="left:22px;top:0px;width:15px;height:16px;background:#e6e8ec"></div><div class="a" style="left:5px;top:16px;width:17px;height:20px;background:#dfe3ec"></div><div class="a" style="left:22px;top:16px;width:15px;height:20px;background:#dde1ea"></div><div class="a" style="left:5px;top:56px;width:17px;height:20px;background:#e2e2e2"></div><div class="a" style="left:22px;top:56px;width:15px;height:20px;background:#dedede"></div><div class="a" style="left:2px;top:96px;width:20px;height:20px;background:#e0e0e0"></div><div class="a" style="left:22px;top:96px;width:12px;height:20px;background:#dcdcdc"></div><div class="a" style="left:0px;top:116px;width:22px;height:40px;background:#f9f9f9"></div><div class="a" style="left:22px;top:116px;width:10px;height:40px;background:#f9f9f9"></div><div class="a" style="left:2px;top:156px;width:20px;height:20px;background:#e3e3e3"></div><div class="a" style="left:22px;top:156px;width:12px;height:20px;background:#dedede"></div><div class="a" style="left:2px;top:196px;width:20px;height:20px;background:#e3e3e3"></div><div class="a" style="left:22px;top:196px;width:13px;height:20px;background:#e0e0e0"></div><div class="a" style="left:2px;top:236px;width:20px;height:40px;background:#efefef"></div><div class="a" style="left:22px;top:236px;width:12px;height:40px;background:#ececec"></div><div class="a" style="left:2px;top:296px;width:20px;height:20px;background:#e2e2e2"></div><div class="a" style="left:22px;top:296px;width:11px;height:20px;background:#dfdfdf"></div><div class="a" style="left:4px;top:336px;width:18px;height:20px;background:#e6e6e6"></div><div class="a" style="left:22px;top:336px;width:15px;height:20px;background:#e3e3e3"></div><div class="a" style="left:7px;top:356px;width:15px;height:40px;background:#f8f8f8"></div><div class="a" style="left:22px;top:356px;width:18px;height:40px;background:#f8f8f8"></div><div class="a" style="left:12px;top:396px;width:10px;height:18px;background:#e3e3e3"></div><div class="a" style="left:22px;top:396px;width:20px;height:18px;background:#e0e0e0"></div></div>
<div class="a" style="left:310px;top:825px;width:171px;height:32px;border:1px solid #d4d7dd;border-radius:3px;font-size:12px;color:#aaa;line-height:30px;padding-left:8px">搜索品名、SKU、FNSKU</div>
<div class="hl" style="top:866px"></div>
<div class="a" style="left:17px;top:867px;width:1880px;height:19px;overflow:hidden"><div class="td" style="left:15px;top:12px;font-weight:bold">汇总</div><div class="td" style="left:728px;top:12px;font-weight:bold">77</div><div class="td" style="left:847px;top:12px;font-weight:bold">74</div><div class="td" style="left:966px;top:12px;font-weight:bold">0</div><div class="td" style="left:1085px;top:12px;font-weight:bold">74</div><div class="td" style="left:1204px;top:12px;font-weight:bold">0</div></div>
<div class="a" style="left:0;top:886px;width:1917px;height:12px;background:#fff"></div>
<div class="a" style="left:0;top:898px;width:1917px;height:46px;background:#fff;box-shadow:0 -3px 6px rgba(0,0,0,0.05)"></div>
<div class="btn" style="left:868px;top:906px;width:86px;height:32px;border:1px solid #d4d7dd;color:#222">取消</div>
<div class="btn" style="left:966px;top:906px;width:86px;height:32px;background:#2f6bff;color:#fff;line-height:32px;font-weight:bold">保存</div>
<div class="dot" style="left:127px;top:91px">1</div>
<div class="tip" style="left:171px;top:81px;width:171px">选择收货仓库</div>
<div class="dot" style="left:429px;top:97px">2</div>
<div class="tip" style="left:473px;top:87px;width:723px">勾选采购单创建收货单会自动关联采购单；也可以手动添加采购单</div>
<div class="dot" style="left:622px;top:182px">3</div>
<div class="tip" style="left:666px;top:172px;width:555px">填写供应商、运单号、费用分配方式、运费等信息</div>
<div class="dot" style="left:15px;top:274px">4</div>
<div class="tip" style="left:59px;top:264px;width:363px">可手动单个添加商品或导入商品</div>
<div class="dot" style="left:1221px;top:317px">5</div>
<div class="tip" style="left:1265px;top:307px;width:579px">需要填写通知收货量，即通知仓库此次需要收货的量</div>
<div class="dot" style="left:1058px;top:902px">6</div>
<div class="tip" style="left:1102px;top:892px;width:123px">点击保存</div></body></html>
